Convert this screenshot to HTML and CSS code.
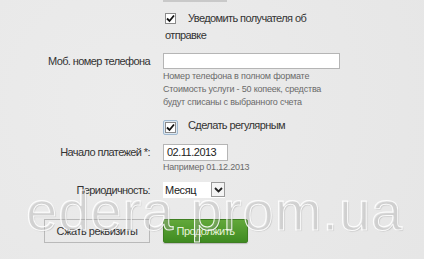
FILE: index.html
```html
<!DOCTYPE html>
<html lang="ru">
<head>
  <meta charset="UTF-8">
  <title>Платеж</title>
  <link rel="stylesheet" href="styles.css">
</head>
<body>
  <div class="page">
    <div class="form">
      <div class="row row-top">
        <div class="label"></div>
        <div class="field"><div class="prev-edge"></div></div>
      </div>

      <div class="row row-notify">
        <div class="label"></div>
        <div class="field">
          <label class="check"><span class="box"><svg width="9" height="9" viewBox="0 0 9 9"><path d="M1 4.5 L3.5 7 L8 1.5" fill="none" stroke="#111" stroke-width="1.8"/></svg></span>Уведомить получателя об отправке</label>
        </div>
      </div>

      <div class="row row-phone">
        <div class="label">Моб. номер телефона</div>
        <div class="field">
          <div class="input input-wide"></div>
          <p class="hint">Номер телефона в полном формате<br>Стоимость услуги - 50 копеек, средства будут списаны с выбранного счета</p>
        </div>
      </div>

      <div class="row row-regular">
        <div class="label"></div>
        <div class="field">
          <label class="check check-focus"><span class="ring"><span class="box"><svg width="9" height="9" viewBox="0 0 9 9"><path d="M1 4.5 L3.5 7 L8 1.5" fill="none" stroke="#111" stroke-width="1.8"/></svg></span></span>Сделать регулярным</label>
        </div>
      </div>

      <div class="row row-date">
        <div class="label">Начало платежей *:</div>
        <div class="field">
          <div class="input input-date">02.11.2013</div>
          <p class="hint hint-date">Например 01.12.2013</p>
        </div>
      </div>

      <div class="row row-period">
        <div class="label">Периодичность:</div>
        <div class="field">
          <div class="select">
            <span class="select-value">Месяц</span>
            <span class="select-arrow"><svg width="9" height="6" viewBox="0 0 9 6"><path d="M1 1 L4.5 4.5 L8 1" fill="none" stroke="#222" stroke-width="1.8"/></svg></span>
          </div>
        </div>
      </div>

      <div class="row row-buttons">
        <div class="label"><span class="btn btn-plain">Сжать реквизиты</span></div>
        <div class="field"><span class="btn btn-green">Продолжить</span></div>
      </div>
    </div>

    <div class="watermark">edera prom.ua</div>
  </div>
</body>
</html>
```

FILE: styles.css
```css
body {
  margin: 0;
  font-family: "Liberation Sans", Arial, sans-serif;
  background-color: #e9e9e9;
  color: #333;
}

.page {
  position: relative;
  width: 424px;
  height: 259px;
  overflow: hidden;
  background: radial-gradient(circle at 30% 40%, #ececec, #e6e6e6);
}

.form {
  display: flex;
  flex-direction: column;
}

.row {
  display: grid;
  grid-template-columns: 150px 177px;
  column-gap: 13px;
  align-items: center;
}

.label {
  text-align: right;
  font-size: 11px;
  letter-spacing: -0.6px;
  color: #333;
}

.prev-edge {
  width: 64px;
  height: 2px;
  background-color: #c9c9c9;
}

.row-notify {
  margin-top: 8px;
}

.check {
  display: block;
  font-size: 11px;
  letter-spacing: -0.6px;
  line-height: 17px;
  color: #333;
  padding-left: 2px;
}

.box {
  display: inline-flex;
  align-items: center;
  justify-content: center;
  width: 9px;
  height: 9px;
  border: 1px solid #8a8a8a;
  background-color: #fff;
  margin-right: 12px;
  vertical-align: -1px;
}

.check-focus {
  padding-left: 0;
}

.ring {
  display: inline-flex;
  align-items: center;
  justify-content: center;
  width: 13px;
  height: 13px;
  border: 1px solid #9fb8cf;
  border-radius: 2px;
  background-color: #dde8f2;
  margin-right: 10px;
  vertical-align: -3px;
}

.ring .box {
  margin-right: 0;
}

.row-phone {
  margin-top: 9px;
  align-items: start;
}

.row-phone .label {
  line-height: 16px;
}

.input {
  box-sizing: border-box;
  height: 16px;
  border: 1px solid #b5b5b5;
  background-color: #fff;
  font-size: 11px;
  letter-spacing: -0.5px;
  line-height: 14px;
  padding-left: 3px;
  color: #222;
}

.input-wide {
  width: 177px;
}

.hint {
  margin: 1px 0 0;
  font-size: 9px;
  letter-spacing: -0.2px;
  line-height: 13px;
  color: #6a6a6a;
}

.row-regular {
  margin-top: 8px;
}

.row-date {
  margin-top: 9px;
  align-items: start;
}

.row-date .label {
  line-height: 17px;
}

.input-date {
  width: 65px;
  height: 17px;
  line-height: 15px;
}

.hint-date {
  margin-top: 0;
  line-height: 12px;
}

.row-period {
  margin-top: 9px;
}

.select {
  display: flex;
  width: 62px;
  height: 16px;
  box-sizing: border-box;
  background-color: #fff;
  font-size: 11px;
  letter-spacing: -0.4px;
  line-height: 16px;
}

.select-value {
  flex: 1;
  padding-left: 2px;
  color: #222;
}

.select-arrow {
  box-sizing: border-box;
  width: 14px;
  height: 15px;
  border: 1px solid #9a9a9a;
  display: flex;
  align-items: center;
  justify-content: center;
  background-color: #f4f4f4;
}

.row-buttons {
  margin-top: 21px;
}

.btn {
  display: inline-block;
  box-sizing: border-box;
  height: 24px;
  line-height: 22px;
  font-size: 11px;
  letter-spacing: -0.5px;
  text-align: center;
}

.btn-plain {
  width: 106px;
  border: 1px solid #b9b9b9;
  color: #333;
}

.btn-green {
  width: 85px;
  border: 1px solid #3f7f22;
  border-radius: 2px;
  background: linear-gradient(#62a83a, #3f8b21);
  color: #e6f3d8;
  box-shadow: 0 1px 1px rgba(0,0,0,0.2);
}

.watermark {
  position: absolute;
  left: 26px;
  top: 176px;
  font-family: "Liberation Sans", Arial, sans-serif;
  font-size: 56px;
  letter-spacing: 1px;
  line-height: 70px;
  color: rgba(255,255,255,0.2);
  -webkit-text-stroke: 1px rgba(255,255,255,0.9);
  text-shadow: 1px 1px 1px rgba(0,0,0,0.15);
  pointer-events: none;
  white-space: nowrap;
}
```
